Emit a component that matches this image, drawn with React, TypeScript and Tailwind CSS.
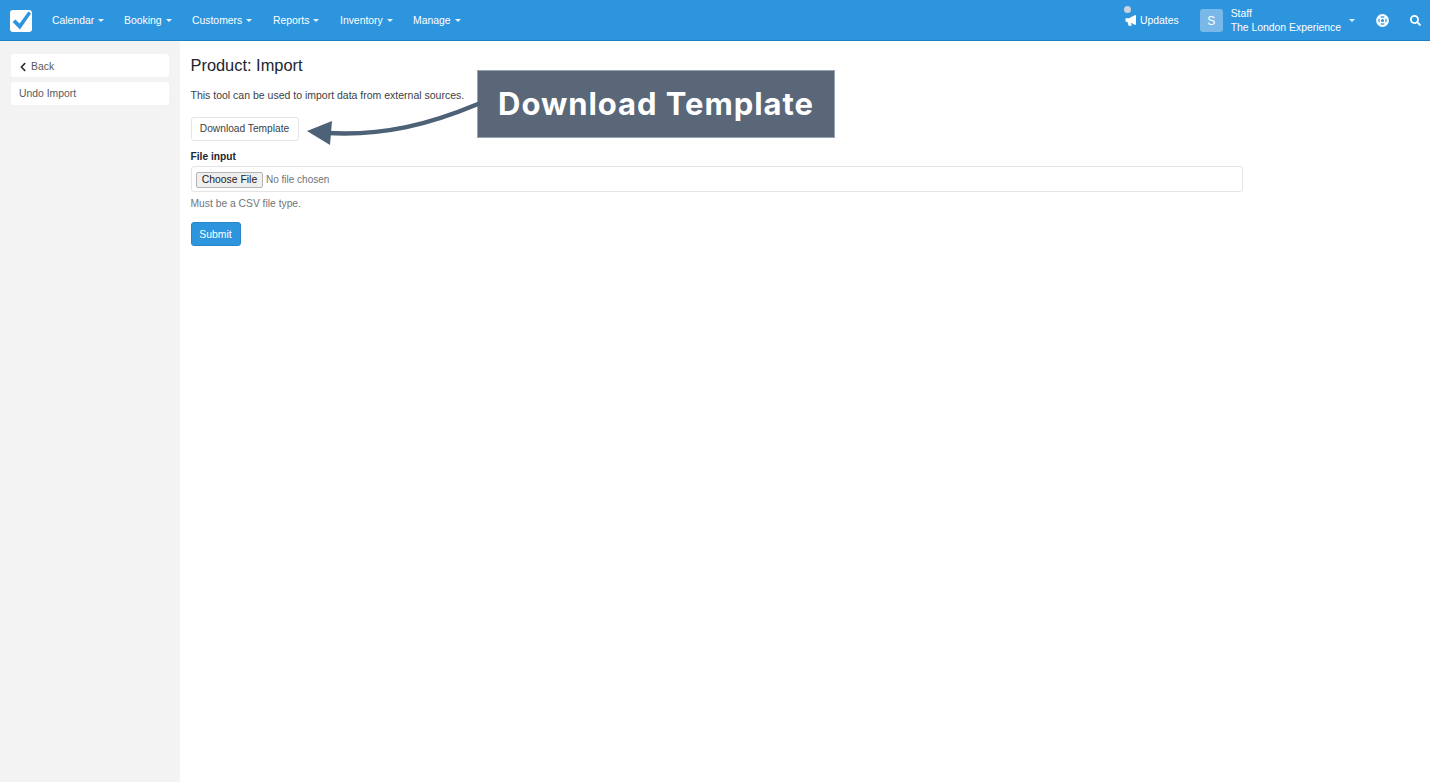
import React from "react";
import { FaSearch, FaChevronLeft } from "react-icons/fa";

const nav: [string, string][] = [
  ["Calendar", "w-[72px]"],
  ["Booking", "w-[68px]"],
  ["Customers", "w-[81px]"],
  ["Reports", "w-[67px]"],
  ["Inventory", "w-[73px]"],
  ["Manage", ""],
];

function Caret() {
  return <span className="ml-[4px] inline-block h-0 w-0 border-x-[3px] border-t-[3px] border-x-transparent border-t-white/90" />;
}

export default function App() {
  return (
    <div className="relative flex h-[782px] w-[1430px] flex-col overflow-hidden bg-white font-['Liberation_Sans',Arial,sans-serif] text-[10.4px] text-[#2a2f36]">
      <header className="flex h-[41px] shrink-0 items-center border-b border-[#1e7fc9] bg-[#2d95de] pt-[1px] text-white">
        <div className="ml-[10px] mr-[20px] flex h-[22px] w-[22px] items-center justify-center rounded-[3px] bg-white">
          <svg viewBox="0 0 22 22" className="h-[22px] w-[22px]">
            <path d="M2.6 12 L5.4 9.6 L9.6 13.6 L18.4 1.6 L21 3.6 L10 19.4 Z" fill="#2d95de" />
          </svg>
        </div>
        <nav className="flex items-center">
          {nav.map(([n, m]) => (
            <div key={n} className={`flex items-center ${m}`}>
              <span>{n}</span>
              <Caret />
            </div>
          ))}
        </nav>
        <div className="ml-auto flex items-center">
          <div className="relative mr-[21px] flex items-center">
            <span className="absolute -top-[7px] -left-[1px] h-[7px] w-[7px] rounded-full bg-[#c9d4dc]" />
            <svg viewBox="0 0 12 11" className="mr-[3px] h-[11px] w-[12px]">
              <path d="M0.5 3.2 L4 3.2 L9.6 0.3 L11 0.3 L11 9.7 L9.6 9.7 L6 7.7 L6.8 10.8 L3.6 10.8 L2.4 6.8 L0.5 6.8 Z" fill="white" />
            </svg>
            <span>Updates</span>
          </div>
          <div className="mr-[8px] flex h-[23px] w-[23px] items-center justify-center rounded-[3px] bg-[#7ab8e9] text-[12px]">S</div>
          <div className="mr-[4px] flex flex-col leading-[14px]">
            <span>Staff</span>
            <span>The London Experience</span>
          </div>
          <Caret />
          <svg viewBox="0 0 13 13" className="ml-[21px] mr-[21px] h-[13px] w-[13px]" fill="none" stroke="white">
            <circle cx="6.5" cy="6.5" r="5.3" strokeWidth="2.2" />
            <circle cx="6.5" cy="6.5" r="2.3" strokeWidth="1.4" />
            <path d="M2.6 2.6 L4.8 4.8 M10.4 2.6 L8.2 4.8 M2.6 10.4 L4.8 8.2 M10.4 10.4 L8.2 8.2" strokeWidth="1.9" />
          </svg>
          <FaSearch size={11} className="mr-[9px]" />
        </div>
      </header>

      <div className="flex min-h-0 flex-1">
        <aside className="flex w-[180px] shrink-0 flex-col gap-[5px] bg-[#f3f3f3] px-[11px] pt-[13px]">
          <div className="flex h-[23px] items-center rounded-[3px] bg-white pl-[7px] pt-[2px] text-[#555b62]">
            <FaChevronLeft size={10} className="mr-[3px] text-[#2a2f36]" />
            Back
          </div>
          <div className="flex h-[23px] items-center rounded-[3px] bg-white pl-[8px] text-[#555b62]">Undo Import</div>
        </aside>

        <main className="flex-1 pl-[10.5px] pt-[14px]">
          <h1 className="text-[16.4px] leading-[20px] text-[#1c2530]">Product: Import</h1>
          <p className="mt-[13px] text-[10.5px] leading-[14px] text-[#3a3f46]">This tool can be used to import data from external sources.</p>
          <button className="mt-[15px] flex h-[24px] w-[108px] items-center justify-center rounded-[3px] border border-[#e3e5e8] bg-white text-[10.2px] text-[#3a3f46]">
            Download Template
          </button>
          <div className="mt-[9px] text-[10.2px] font-bold leading-[13px] text-[#1c2530]">File input</div>
          <div className="mt-[3px] flex h-[26px] w-[1052px] items-center rounded-[3px] border border-[#e3e5e8] pl-[4.5px] pt-[1px]">
            <button className="flex h-[16px] w-[67px] items-center justify-center rounded-[2px] border border-[#b5b5b5] bg-[#efefef] text-[10.4px] text-[#222]">Choose File</button>
            <span className="ml-[3px] text-[10px] text-[#6f7378]">No file chosen</span>
          </div>
          <p className="mt-[5px] text-[10.3px] leading-[14px] text-[#70757b]">Must be a CSV file type.</p>
          <button className="mt-[11px] flex h-[24px] w-[50px] items-center justify-center rounded-[3px] border border-[#2a86c9] bg-[#2d95de] pt-[1px] text-[10.4px] text-white">Submit</button>
        </main>
      </div>

      <div className="absolute left-[477px] top-[70px] flex h-[68px] w-[358px] items-center justify-center border border-[#97a3b0] bg-[#5a6778] pt-[1px] font-['Inter',sans-serif] text-[31px] font-bold tracking-[0.95px] text-white">
        Download Template
      </div>
      <svg className="absolute left-[300px] top-[100px]" width="190" height="50" viewBox="0 0 190 50">
        <path d="M178 4 C 130 24, 85 36, 27 33" fill="none" stroke="#4d6177" strokeWidth="4.5" strokeLinecap="round" />
        <path d="M7 31 L32 21 L30 45 Z" fill="#4d6177" />
      </svg>
    </div>
  );
}
